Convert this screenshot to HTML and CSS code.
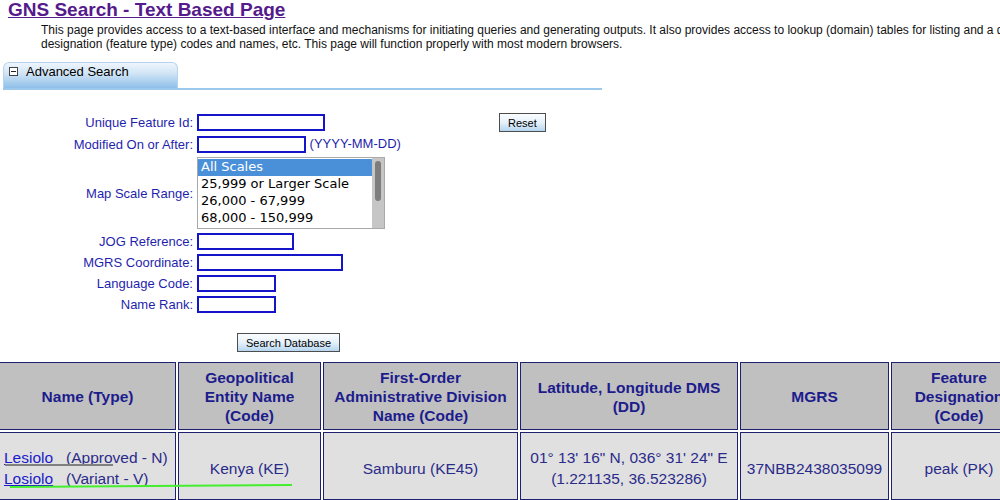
FILE: index.html
```html
<!DOCTYPE html>
<html lang="en">
<head>
<meta charset="utf-8">
<title>GNS Search - Text Based Page</title>
<link rel="stylesheet" href="styles.css">
</head>
<body>
<h1 class="title"><a href="#">GNS Search - Text Based Page</a></h1>
<p class="intro">This page provides access to a text-based interface and mechanisms for initiating queries and generating outputs. It also provides access to lookup (domain) tables for listing and a description of feature<br>designation (feature type) codes and names, etc. This page will function properly with most modern browsers.</p>

<div class="panel">
  <div class="tab">
    <svg class="toggle" width="9" height="9" viewBox="0 0 9 9" aria-hidden="true"><rect x="0.5" y="0.5" width="8" height="8" fill="#fff" stroke="#444"/><line x1="2" y1="4.5" x2="7" y2="4.5" stroke="#222"/></svg>
    <span>Advanced Search</span>
  </div>
</div>

<form class="search">
  <label for="ufi">Unique Feature Id:</label>
  <div><input id="ufi" class="box w128" type="text"></div>
  <div><button type="reset" class="btn">Reset</button></div>

  <label for="mod">Modified On or After:</label>
  <div class="span2"><input id="mod" class="box w109" type="text"> (YYYY-MM-DD)</div>

  <label for="scale">Map Scale Range:</label>
  <div class="span2">
    <div class="listbox">
      <select id="scale" class="scale" size="4">
        <option selected>All Scales</option>
        <option>25,999 or Larger Scale</option>
        <option>26,000 - 67,999</option>
        <option>68,000 - 150,999</option>
        <option>151,000 - 499,999</option>
        <option>500,000 or Smaller Scale</option>
        <option>Unknown Scale</option>
      </select>
      <span class="track" aria-hidden="true"><span class="thumb"></span></span>
    </div>
  </div>

  <label for="jog">JOG Reference:</label>
  <div class="span2"><input id="jog" class="box w97" type="text"></div>

  <label for="mgrs">MGRS Coordinate:</label>
  <div class="span2"><input id="mgrs" class="box w146" type="text"></div>

  <label for="lang">Language Code:</label>
  <div class="span2"><input id="lang" class="box w79" type="text"></div>

  <label for="rank">Name Rank:</label>
  <div class="span2"><input id="rank" class="box w79" type="text"></div>

  <div class="actions"><button type="submit" class="btn">Search Database</button></div>
</form>

<div class="results">
  <table class="grid">
    <thead>
      <tr>
        <th class="c1">Name (Type)</th>
        <th class="c2">Geopolitical Entity Name (Code)</th>
        <th class="c3">First-Order Administrative Division Name (Code)</th>
        <th class="c4">Latitude, Longitude DMS (DD)</th>
        <th class="c5">MGRS</th>
        <th class="c6">Feature Designation (Code)</th>
      </tr>
    </thead>
    <tbody>
      <tr>
        <td class="name"><a href="#">Lesiolo</a>&nbsp;&nbsp;&nbsp;(Approved - N)<br><a href="#">Losiolo</a>&nbsp;&nbsp;&nbsp;(Variant - V)</td>
        <td>Kenya (KE)</td>
        <td>Samburu (KE45)</td>
        <td>01° 13' 16" N, 036° 31' 24" E<br>(1.221135, 36.523286)</td>
        <td>37NBB2438035099</td>
        <td>peak (PK)</td>
      </tr>
    </tbody>
  </table>
  <span class="mark mark-gray"></span>
  <span class="mark mark-green"></span>
</div>
</body>
</html>
```

FILE: styles.css
```css
html, body {
  margin: 0;
  padding: 0;
  overflow: hidden;
  background: #fff;
}

body {
  font-family: "Liberation Sans", Arial, sans-serif;
  color: #000;
}

.title {
  margin: 0;
  padding-left: 8px;
  font-size: 19px;
  line-height: 20px;
  font-weight: bold;
}

.title a {
  color: #551a8b;
  text-decoration: underline;
}

.intro {
  margin: 3px 0 0;
  padding-left: 41px;
  font-size: 12px;
  line-height: 14px;
  color: #111;
  white-space: nowrap;
}

.panel {
  margin: 11px 0 0 3px;
  width: 599px;
  border-bottom: 2px solid #9cc8ec;
  display: flex;
}

.tab {
  width: 175px;
  height: 26px;
  box-sizing: border-box;
  border: 1px solid #b5d3ee;
  border-bottom: none;
  border-radius: 6px 6px 0 0;
  background: linear-gradient(#eef5fc, #d3e6f6 40%, #8ebfe9);
  display: flex;
  align-items: flex-start;
  gap: 8px;
  padding: 1px 0 0 5px;
  font-size: 13px;
  line-height: 15px;
}

.toggle {
  margin-top: 3px;
  flex: none;
}

.search {
  margin-top: 23px;
  display: grid;
  grid-template-columns: 193px 298px auto;
  column-gap: 4px;
  row-gap: 4px;
  align-items: center;
  font-size: 13px;
  color: #1f1fae;
}

.search label {
  text-align: right;
}

.span2 {
  grid-column: 2 / 4;
}

.box {
  box-sizing: border-box;
  height: 17px;
  margin: 0;
  padding: 0 2px;
  border: 2px solid #1414c8;
  background: #fff;
  vertical-align: middle;
  font: 13px "Liberation Sans", Arial, sans-serif;
}

.w128 { width: 128px; }
.w109 { width: 109px; }
.w97 { width: 97px; }
.w146 { width: 146px; }
.w79 { width: 79px; }

.btn {
  box-sizing: border-box;
  height: 19px;
  margin: 0;
  padding: 0 8px;
  border: 1px solid #4d4d4d;
  border-radius: 0;
  background: linear-gradient(#fbfdff, #e6f1fa 50%, #b5d5ef);
  font: 11px "Liberation Sans", Arial, sans-serif;
  color: #000;
}

.listbox {
  display: flex;
  width: 188px;
  height: 72px;
  box-sizing: border-box;
  border: 1px solid #a9a9a9;
  background: #fff;
}

.scale {
  flex: 1;
  min-width: 0;
  height: 100%;
  margin: 0;
  padding: 1px 0 0;
  border: 0;
  outline: none;
  font-family: "DejaVu Sans", sans-serif;
  font-size: 13px;
  color: #000;
  overflow: hidden;
  background: #fff;
}

.scale option {
  padding: 0 3px;
  min-height: 17px;
  line-height: 17px;
}

.scale option:checked {
  background: linear-gradient(#4a90d9, #4a90d9);
  color: #fff;
}

.track {
  flex: none;
  width: 12px;
  background: #c6c6c6;
  padding: 3px 3px 0;
  box-sizing: border-box;
}

.thumb {
  display: block;
  height: 40px;
  border-radius: 3px;
  background: #7d7d7d;
}

.actions {
  grid-column: 1 / 4;
  padding-left: 237px;
  margin-top: 16px;
}

.results {
  position: relative;
  margin-top: 8px;
}

.grid {
  margin-left: -3px;
  width: 1032px;
  table-layout: fixed;
  border-collapse: separate;
  border-spacing: 2px;
}

.grid th,
.grid td {
  box-sizing: border-box;
  border: 1px solid #202070;
  text-align: center;
  vertical-align: middle;
}

.grid th {
  background: #c0c0c0;
  color: #1c1c8c;
  font-size: 15.5px;
  font-weight: bold;
  line-height: 19px;
  padding: 5px 5px 4px;
}

.grid td {
  background: #e0e0e0;
  color: #2b2b8a;
  font-size: 15.5px;
  line-height: 21px;
  padding: 14px 4px 10px;
}

.grid td.name {
  text-align: left;
  white-space: nowrap;
}

.grid a {
  color: #1a1acc;
  text-decoration: underline;
}

.c1 { width: 177px; }
.c2 { width: 143px; }
.c3 { width: 195px; }
.c4 { width: 218px; }
.c5 { width: 149px; }
.c6 { width: 136px; }

.mark {
  position: absolute;
  display: block;
  height: 2px;
}

.mark-gray {
  left: 5px;
  top: 104px;
  width: 108px;
  background: #808080;
}

.mark-green {
  left: 10px;
  top: 126px;
  width: 282px;
  background: #44ee2e;
  transform: rotate(-0.4deg);
  transform-origin: left center;
}
```
